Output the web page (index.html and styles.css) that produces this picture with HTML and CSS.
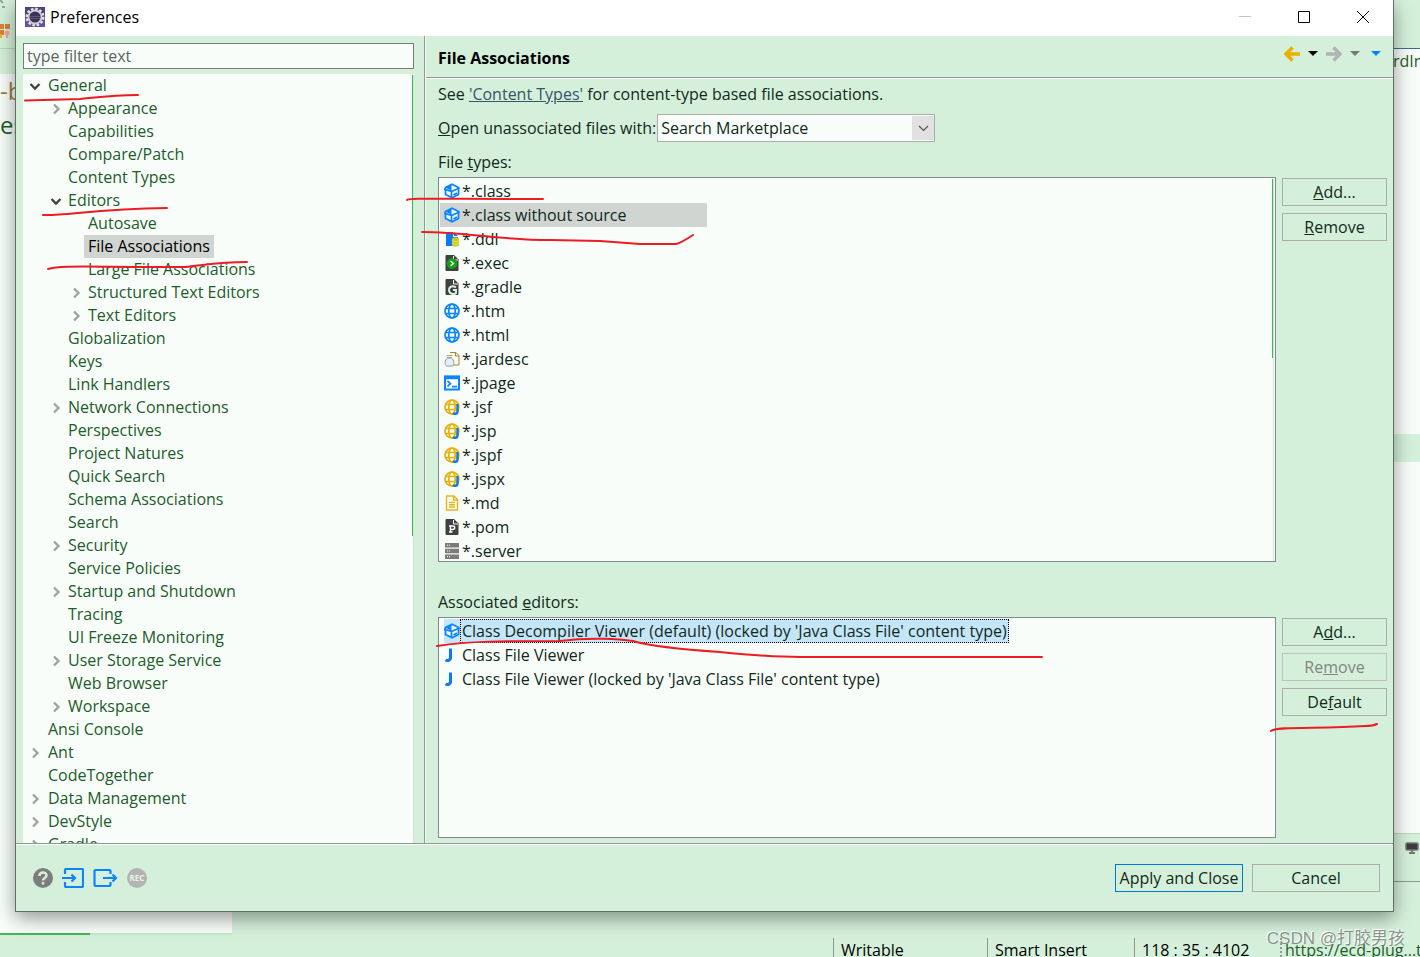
FILE: index.html
```html
<!DOCTYPE html>
<html lang="en">

<head>
  <meta charset="UTF-8">
  <meta name="viewport" content="width=device-width, initial-scale=1.0">
  <title>Preferences</title>
  <link rel="stylesheet" href="styles.css">
</head>

<body>
  <svg class="symbols" aria-hidden="true">
    <symbol id="chev" viewBox="0 0 12 12"><path d="M4 1.500 8.500 6 4 10.500" fill="none" stroke="currentColor" stroke-width="2.300"/></symbol>
    <symbol id="i-class" viewBox="0 0 16 16">
      <path d="M8 1.200 14.500 4.500v7L8 14.800 1.500 11.500v-7z" fill="#f8fdf9" stroke="#0a84ff" stroke-width="1.800"/>
      <path d="M1.500 4.500 7.500 1v7z" fill="#0a84ff"/>
      <path d="M0 6 7.500 8.500v6M7.500 8.500 15.500 5M9.500 12 13 10" fill="none" stroke="#0a84ff" stroke-width="1.800"/>
    </symbol>
    <symbol id="i-ddl" viewBox="0 0 16 16">
      <path d="M2 1h7v5h5v9H2z" fill="#0a7bf5"/><path d="M10 1l4 4h-4z" fill="#0a7bf5"/>
      <path d="M8 8c0-2 7-2 7 0v6c0 2-7 2-7 0z" fill="#c9cc1c"/>
      <path d="M8 9.500c1 1.500 6 1.500 7 0M8 12c1 1.500 6 1.500 7 0" fill="none" stroke="#f3f0a0" stroke-width=".6"/>
    </symbol>
    <symbol id="i-exec" viewBox="0 0 16 16">
      <path d="M2.500 0H10l4.500 4.500V15q0 1-1 1h-11q-1 0-1-1V1q0-1 1-1z" fill="#414141"/><path d="M9.500 1v4H14" fill="none" stroke="#f8fdf9"/>
      <circle cx="8" cy="8.500" r="5.300" fill="#16a016"/><path d="M6.500 6 9.500 8.500l-3 2.500" fill="none" stroke="#fff" stroke-width="1.300"/>
    </symbol>
    <symbol id="i-gradle" viewBox="0 0 16 16">
      <path d="M2.500 0H10l4.500 4.500V15q0 1-1 1h-11q-1 0-1-1V1q0-1 1-1z" fill="#414141"/><path d="M9.500 1v4H14" fill="none" stroke="#f8fdf9"/>
      <path d="M12 8.500C9 6 5 7.500 5 11c0 4 5 5 7 3v-3H9" fill="none" stroke="#d9f3e0" stroke-width="1.900"/>
    </symbol>
    <symbol id="i-web" viewBox="0 0 16 16">
      <g fill="none" stroke="currentColor" stroke-width="1.700">
        <circle cx="8" cy="8" r="7"/><ellipse cx="8" cy="8" rx="3.200" ry="7"/><path d="M1.500 5.500h13M1.500 10.500h13"/>
      </g>
    </symbol>
    <symbol id="i-jsp" viewBox="0 0 16 16">
      <g fill="none" stroke="#e3b20a" stroke-width="1.700">
        <circle cx="8" cy="8" r="7"/><ellipse cx="8" cy="8" rx="3.200" ry="7"/><path d="M1.500 5.500h13M1.500 10.500h13"/>
      </g>
      <path d="M13.500 5v8c0 2-3 2.500-4.500 1.200" fill="none" stroke="#0a7bf5" stroke-width="2.400"/>
    </symbol>
    <symbol id="i-jar" viewBox="0 0 16 16">
      <path d="M6 1.500h6l3 3V14H8" fill="#fffbe9" stroke="#a58443"/><path d="M11.500 1.500v3.500h3.500" fill="none" stroke="#a58443"/>
      <path d="M2.500 4.500h6M3 6.500h5" fill="none" stroke="#b59a5c"/>
      <path d="M3.500 7c-3 2-3 7-1 8h6c2-1 2-6-1-8z" fill="#e8eefb" stroke="#8f97a8"/>
    </symbol>
    <symbol id="i-jpage" viewBox="0 0 16 16">
      <rect x="1" y="1.500" width="14" height="13" fill="#fff" stroke="#0a84ff" stroke-width="2"/><path d="M0 2.500h16" stroke="#0a84ff" stroke-width="3.500"/>
      <path d="M3.500 6 6.500 8.700l-3 2.700M8 11.700h5" fill="none" stroke="#0a84ff" stroke-width="1.700"/>
    </symbol>
    <symbol id="i-md" viewBox="0 0 16 16">
      <path d="M2.500 1H10l3.500 3.500V15h-11zM9.500 1v4h4M5 7.500h6M5 9.700h6M5 12h6" fill="none" stroke="#e8b61c" stroke-width="1.400"/>
    </symbol>
    <symbol id="i-pom" viewBox="0 0 16 16">
      <path d="M2.500 0H10l4.500 4.500V15q0 1-1 1h-11q-1 0-1-1V1q0-1 1-1z" fill="#414141"/><path d="M9.500 1v4H14" fill="none" stroke="#f8fdf9"/>
      <path d="M6.500 13v-6h2c3 0 3 3.500 0 3.500h-2M5 13h3.500M5 7h2" fill="none" stroke="#fff" stroke-width="1.400"/>
    </symbol>
    <symbol id="i-server" viewBox="0 0 16 16">
      <path d="M1 0h14v4.500H1zM1 5.800h14v4.500H1zM1 11.500h14V16H1z" fill="#7c7c7c"/><path d="M3 2.200h1M5 2.200h1M3 8h1M5 8h1M3 13.700h1M5 13.700h1" stroke="#fff"/>
    </symbol>
    <symbol id="i-j" viewBox="0 0 16 16">
      <path d="M6.500 1.500v9c0 3-3 3.500-5 2.500" fill="none" stroke="#0a7bf5" stroke-width="3"/>
    </symbol>
  </svg>

  <div class="workbench">
    <div class="backdrop">
      <div class="pane pane-left">
        <div class="pane-tools">
          <svg width="12" height="40" viewBox="0 0 12 40">
            <path d="M0 0l3 3M2 7h3" stroke="#9aa59c" stroke-width="2"/>
            <path d="M0 24h4v5H0zM5 24h5v5H5zM0 30h4v5H0z" fill="#d98236"/><path d="M0 34h2v4H0z" fill="#eeb211"/>
            <circle cx="7" cy="33" r="2.500" fill="#f7a3a3"/><path d="M7 34v4" stroke="#f7a3a3" stroke-width="2"/>
          </svg>
        </div>
        <div class="pane-code">
          <span class="code-tag">-b</span>
          <span class="code-text">es</span>
        </div>
        <div class="pane-scroll"></div>
      </div>
      <div class="pane pane-right">
        <div class="pane-tab"></div>
        <div class="pane-doc">
          <span class="doc-text">rdIn</span>
          <div class="current-line"></div>
        </div>
        <div class="pane-console">
          <svg width="14" height="12" viewBox="0 0 14 12"><rect x="1" y="1" width="12" height="7" rx="1" fill="#3c3c3c" stroke="#777" stroke-width="1.500"/><path d="M7 8v3M4 11h6" stroke="#777" stroke-width="2"/></svg>
        </div>
        <div class="pane-rest"></div>
      </div>
    </div>
    <footer class="status">
      <span class="status-item status-mode">Writable</span>
      <span class="status-item status-insert">Smart Insert</span>
      <span class="status-item status-pos">118 : 35 : 4102</span>
      <span class="status-link">https://ecd-plug...t</span>
    </footer>
  </div>

  <main class="dialog">
    <header class="titlebar">
      <svg class="app-icon" width="20" height="20" viewBox="0 0 20 20">
        <rect width="20" height="20" fill="#6650a0"/><rect width="20" height="9" fill="#51417f"/>
        <circle cx="10" cy="10" r="8.300" fill="none" stroke="#e3e3de" stroke-width="2.400" stroke-dasharray="2.600 1.740"/>
        <circle cx="10" cy="10" r="6.500" fill="#3b3458" stroke="#d0d0cc" stroke-width="1.800"/><path d="M5 9.500h10M5 11.500h10" stroke="#5d5280"/>
      </svg>
      <span class="title">Preferences</span>
      <button class="win-btn" type="button" aria-label="Minimize" disabled><svg width="12" height="12"><path d="M0 5.500h12" stroke="#c4c4c4"/></svg></button>
      <button class="win-btn" type="button" aria-label="Maximize"><svg width="12" height="12"><path d="M.5.5h11v11H.5z" fill="none" stroke="#000"/></svg></button>
      <button class="win-btn" type="button" aria-label="Close"><svg width="12" height="12"><path d="M0 0l12 12M12 0 0 12" stroke="#000"/></svg></button>
    </header>

    <div class="dialog-body">
      <nav class="sidebar">
        <input class="filter" type="text" placeholder="type filter text" aria-label="type filter text">
        <div class="tree-box">
          <ul class="tree">
            <li><svg class="arrow open"><use href="#chev"/></svg><span>General</span>
              <ul>
                <li><svg class="arrow"><use href="#chev"/></svg><span>Appearance</span></li>
                <li><span>Capabilities</span></li>
                <li><span>Compare/Patch</span></li>
                <li><span>Content Types</span></li>
                <li><svg class="arrow open"><use href="#chev"/></svg><span>Editors</span>
                  <ul>
                    <li><span>Autosave</span></li>
                    <li><span class="current">File Associations</span></li>
                    <li><span>Large File Associations</span></li>
                    <li><svg class="arrow"><use href="#chev"/></svg><span>Structured Text Editors</span></li>
                    <li><svg class="arrow"><use href="#chev"/></svg><span>Text Editors</span></li>
                  </ul>
                </li>
                <li><span>Globalization</span></li>
                <li><span>Keys</span></li>
                <li><span>Link Handlers</span></li>
                <li><svg class="arrow"><use href="#chev"/></svg><span>Network Connections</span></li>
                <li><span>Perspectives</span></li>
                <li><span>Project Natures</span></li>
                <li><span>Quick Search</span></li>
                <li><span>Schema Associations</span></li>
                <li><span>Search</span></li>
                <li><svg class="arrow"><use href="#chev"/></svg><span>Security</span></li>
                <li><span>Service Policies</span></li>
                <li><svg class="arrow"><use href="#chev"/></svg><span>Startup and Shutdown</span></li>
                <li><span>Tracing</span></li>
                <li><span>UI Freeze Monitoring</span></li>
                <li><svg class="arrow"><use href="#chev"/></svg><span>User Storage Service</span></li>
                <li><span>Web Browser</span></li>
                <li><svg class="arrow"><use href="#chev"/></svg><span>Workspace</span></li>
              </ul>
            </li>
            <li><span>Ansi Console</span></li>
            <li><svg class="arrow"><use href="#chev"/></svg><span>Ant</span></li>
            <li><span>CodeTogether</span></li>
            <li><svg class="arrow"><use href="#chev"/></svg><span>Data Management</span></li>
            <li><svg class="arrow"><use href="#chev"/></svg><span>DevStyle</span></li>
            <li><svg class="arrow"><use href="#chev"/></svg><span>Gradle</span></li>
          </ul>
          <div class="scroll"><div class="thumb thumb-tree"></div></div>
        </div>
      </nav>

      <section class="page">
        <div class="page-head">
          <h1>File Associations</h1>
          <div class="history">
            <button type="button" aria-label="Back"><svg width="16" height="16" viewBox="0 0 16 16"><path d="M16 8H2M8.500 1.500 2 8l6.500 6.500" fill="none" stroke="#e8b000" stroke-width="3.500"/></svg></button>
            <button type="button" aria-label="Back history"><svg width="10" height="6"><path d="M0 0h10L5 5z" fill="#000"/></svg></button>
            <button type="button" aria-label="Forward"><svg width="16" height="16" viewBox="0 0 16 16"><path d="M0 8h14M7.500 1.500 14 8l-6.500 6.500" fill="none" stroke="#b3b3b3" stroke-width="3.500"/></svg></button>
            <button type="button" aria-label="Forward history"><svg width="10" height="6"><path d="M0 0h10L5 5z" fill="#777"/></svg></button>
            <button class="view-menu" type="button" aria-label="Menu"><svg width="10" height="6"><path d="M0 0h10L5 5z" fill="#0a84ff"/></svg></button>
          </div>
        </div>

        <div class="page-content">
          <p class="row">See <a href="#">'Content Types'</a> for content-type based file associations.</p>
          <div class="row row-open">
            <label for="open-with"><u>O</u>pen unassociated files with:</label>
            <div class="combo">
              <select id="open-with">
                <option>Search Marketplace</option>
              </select>
              <svg class="combo-arrow" width="22" height="24"><path d="M7 10l4.500 4.500L16 10" fill="none" stroke="#555" stroke-width="1.200"/></svg>
            </div>
          </div>
          <p class="row" id="types-label">File <u>t</u>ypes:</p>
          <div class="list-box">
            <ul class="list" aria-labelledby="types-label">
              <li><svg><use href="#i-class"/></svg><span>*.class</span></li>
              <li class="picked"><svg><use href="#i-class"/></svg><span>*.class without source</span></li>
              <li><svg><use href="#i-ddl"/></svg><span>*.ddl</span></li>
              <li><svg><use href="#i-exec"/></svg><span>*.exec</span></li>
              <li><svg><use href="#i-gradle"/></svg><span>*.gradle</span></li>
              <li><svg class="web"><use href="#i-web"/></svg><span>*.htm</span></li>
              <li><svg class="web"><use href="#i-web"/></svg><span>*.html</span></li>
              <li><svg><use href="#i-jar"/></svg><span>*.jardesc</span></li>
              <li><svg><use href="#i-jpage"/></svg><span>*.jpage</span></li>
              <li><svg><use href="#i-jsp"/></svg><span>*.jsf</span></li>
              <li><svg><use href="#i-jsp"/></svg><span>*.jsp</span></li>
              <li><svg><use href="#i-jsp"/></svg><span>*.jspf</span></li>
              <li><svg><use href="#i-jsp"/></svg><span>*.jspx</span></li>
              <li><svg><use href="#i-md"/></svg><span>*.md</span></li>
              <li><svg><use href="#i-pom"/></svg><span>*.pom</span></li>
              <li><svg><use href="#i-server"/></svg><span>*.server</span></li>
            </ul>
            <div class="scroll"><div class="thumb thumb-types"></div></div>
          </div>
          <div class="side-buttons">
            <button class="btn" type="button"><u>A</u>dd...</button>
            <button class="btn" type="button"><u>R</u>emove</button>
          </div>
          <p class="row row-editors" id="editors-label">Associated <u>e</u>ditors:</p>
          <div class="list-box">
            <ul class="list" aria-labelledby="editors-label">
              <li class="focused"><svg><use href="#i-class"/></svg><span>Class Decompiler Viewer (default) (locked by 'Java Class File' content type)</span></li>
              <li><svg><use href="#i-j"/></svg><span>Class File Viewer</span></li>
              <li><svg><use href="#i-j"/></svg><span>Class File Viewer (locked by 'Java Class File' content type)</span></li>
            </ul>
          </div>
          <div class="side-buttons">
            <button class="btn" type="button">A<u>d</u>d...</button>
            <button class="btn" type="button" disabled>Re<u>m</u>ove</button>
            <button class="btn" type="button">De<u>f</u>ault</button>
          </div>
        </div>
      </section>
    </div>

    <footer class="dialog-foot">
      <button class="icon-btn" type="button" aria-label="Help"><svg width="20" height="20" viewBox="0 0 20 20"><circle cx="10" cy="10" r="10" fill="#7d7d7d"/><path d="M6.500 8c0-4.500 7-4.500 7-.5 0 2.500-3.500 2.500-3.500 5M10 14v2.500" fill="none" stroke="#d5f0da" stroke-width="2.500"/></svg></button>
      <button class="icon-btn" type="button" aria-label="Import"><svg width="22" height="20" viewBox="0 0 22 20"><path d="M3 6V2q0-1 1-1h16q1 0 1 1v16q0 1-1 1H4q-1 0-1-1v-4M0 10h13M9.500 6.500 13 10l-3.500 3.500" fill="none" stroke="#0a84ff" stroke-width="2.200"/></svg></button>
      <button class="icon-btn" type="button" aria-label="Export"><svg width="25" height="20" viewBox="0 0 25 20"><path d="M17.500 6V3q0-1-1-1H2.500q-1 0-1 1v14q0 1 1 1h14q1 0 1-1v-3M10 10h13M19.500 6.500 23 10l-3.500 3.500" fill="none" stroke="#0a84ff" stroke-width="2.200"/></svg></button>
      <button class="icon-btn" type="button" aria-label="Record"><svg width="20" height="20" viewBox="0 0 20 20"><circle cx="10" cy="10" r="10" fill="#b4b4b4"/><text class="rec" x="10" y="13" text-anchor="middle">REC</text></svg></button>
      <div class="foot-actions">
        <button class="btn btn-default" type="button">Apply and Close</button>
        <button class="btn" type="button">Cancel</button>
      </div>
    </footer>
  </main>

  <!-- red pen marks -->
  <svg class="marks" width="1420" height="957" viewBox="0 0 1420 957" aria-hidden="true">
    <path d="M25 100.500 80 99C100 97 115 95 138 95"/>
    <path d="M43 215C65 216 95 209 167 208"/>
    <path d="M48 269C60 265 85 267 185 267 205 265 220 262 247 262"/>
    <path d="M407 200C410 198 425 199 543 199"/>
    <path d="M422 232C465 232 500 240 550 240L600 241 640 244H676Q681 243 693 235"/>
    <path d="M437 646C470 641 500 641 560 641 590 637 620 639 633 641 650 646 690 650 720 652 750 655 770 657 800 657H1042"/>
    <path d="M1271 731C1275 726 1320 729 1365 726Q1373 726 1377 724"/>
  </svg>
  <div class="watermark">CSDN @打胶男孩</div>
</body>

</html>
```

FILE: styles.css
```css
* {
  box-sizing: border-box;
}
body {
  margin: 0;
  height: 100vh;
  position: relative;
  overflow: hidden;
  background: #d5f0da;
  color: #10291a;
  font-family: "Open Sans", "Noto Sans", "Noto Sans CJK SC", sans-serif;
  font-size: 16px;
  line-height: 24px;
}
ul {
  list-style: none;
  margin: 0;
  padding: 0;
}
p, h1 {
  margin: 0;
}
button, input, select {
  font: inherit;
  color: inherit;
}
button {
  background: none;
  border: 0;
  padding: 0;
}
svg {
  display: block;
}
.symbols {
  position: absolute;
  width: 0;
  height: 0;
}

/* workbench behind the dialog */
.workbench {
  height: 100%;
  display: flex;
  flex-direction: column;
}
.backdrop {
  flex: 1;
  min-height: 0;
  display: flex;
  justify-content: space-between;
}
.pane {
  display: flex;
  flex-direction: column;
}
.pane-left {
  width: 232px;
  padding-bottom: 3px;
}
.pane-tools {
  height: 74px;
  background: linear-gradient(#b9d9bf, #b9d9bf) 0 48px / 100% 1px no-repeat;
}
.pane-code {
  flex: 1;
  background: #f8fdf9;
  font-size: 24px;
  line-height: 34px;
}
.pane-code span {
  display: block;
}
.code-tag {
  color: #9a7a45;
}
.code-text {
  color: #1d5c2c;
}
.pane-scroll {
  height: 2px;
  background: linear-gradient(to right, #3db85a 90px, #c2e8ca 90px);
}
.pane-right {
  width: 60px;
}
.pane-tab {
  height: 49px;
  border-bottom: 1px solid #416a94;
}
.pane-doc {
  flex: 1;
  background: #f8fdf9;
}
.doc-text {
  display: block;
  height: 385px;
  padding-left: 33px;
  color: #1d5c2c;
}
.current-line {
  height: 28px;
  background: #d5f0da;
}
.pane-console {
  height: 49px;
  border-top: 1px solid #b9d9bf;
  border-bottom: 1px solid #8e9a91;
  padding: 8px 0 0 45px;
}
.pane-rest {
  height: 56px;
}
.status {
  height: 19px;
  display: flex;
  justify-content: flex-end;
  overflow: hidden;
  white-space: nowrap;
  color: #000;
}
.status-item {
  padding-left: 7px;
  border-left: 1px solid #8e9a91;
}
.status-mode {
  width: 154px;
}
.status-insert {
  width: 147px;
}
.status-pos {
  width: 146px;
}
.status-link {
  width: 140px;
  padding-left: 3px;
  border-left: 2px dotted #8e9a91;
  color: #1d5c2c;
}

/* dialog window */
.dialog {
  position: absolute;
  top: 0;
  right: 26px;
  bottom: 45px;
  left: 15px;
  display: flex;
  flex-direction: column;
  background: #d5f0da;
  border: 1px solid #5f6f64;
  border-top: 0;
  box-shadow: 0 6px 18px rgba(0, 0, 0, 0.4);
}
.titlebar {
  height: 36px;
  flex: none;
  display: flex;
  align-items: center;
  padding: 0 1px 2px 9px;
  background: #fff;
  color: #000;
}
.title {
  flex: 1;
  padding-left: 5px;
}
.win-btn {
  width: 59px;
  height: 34px;
  display: grid;
  place-items: center;
}
.dialog-body {
  flex: 1;
  min-height: 0;
  display: flex;
}

/* tree */
.sidebar {
  width: 409px;
  flex: none;
  display: flex;
  flex-direction: column;
  padding: 7px 10px 0 7px;
  border-right: 1px solid #8e9a91;
}
.filter {
  height: 26px;
  width: 100%;
  padding: 0 3px;
  background: #f8fdf9;
  border: 1px solid #7a7a7a;
}
.filter::placeholder {
  color: #5a6660;
}
.tree-box {
  position: relative;
  flex: 1;
  min-height: 0;
  margin-top: 5px;
  overflow: hidden;
  background: #f8fdf9;
}
.tree {
  color: #1d5c2c;
  line-height: 23px;
}
.tree li {
  position: relative;
  padding-left: 20px;
}
.tree li > span {
  display: inline-block;
  height: 23px;
  padding: 0 4px;
  vertical-align: top;
}
.tree > li {
  padding-left: 21px;
}
.tree .current {
  background: #d1d5d1;
  color: #000;
}
.arrow {
  position: absolute;
  left: 6px;
  top: 6px;
  width: 12px;
  height: 12px;
  color: #a0a0a0;
}
.arrow.open {
  color: #404040;
  transform: rotate(90deg);
}
.scroll {
  position: absolute;
  top: 1px;
  right: 0;
  bottom: 0;
  width: 2px;
  border-right: 1px solid #c9e8cf;
}
.list-box .scroll {
  right: 1px;
}
.thumb {
  width: 1px;
  background: #3db85a;
}
.thumb-tree {
  height: 60%;
}
.thumb-types {
  height: 47%;
}

/* preference page */
.page {
  flex: 1;
  min-width: 0;
  display: flex;
  flex-direction: column;
  border-left: 1px solid #fff;
}
.page-head {
  height: 42px;
  display: flex;
  justify-content: space-between;
  padding: 0 12px;
  border-bottom: 1px solid #8e9a91;
}
h1 {
  font-size: 16px;
  line-height: 44px;
  color: #000;
}
.history {
  display: flex;
  align-items: center;
  gap: 8px;
  height: 36px;
}
.view-menu {
  margin-left: 3px;
}
.page-content {
  flex: 1;
  min-height: 0;
  display: grid;
  grid-template-columns: 1fr 105px;
  grid-template-rows: 30px 38px 30px 40fr 55px 23fr;
  column-gap: 6px;
  padding: 0 6px 5px 12px;
  border-top: 1px solid #fff;
}
.row {
  grid-column: 1 / -1;
  line-height: 30px;
}
.row a {
  color: #33566a;
}
.row-open {
  display: flex;
  align-items: center;
  gap: 1px;
}
.row-editors {
  padding-top: 25px;
}
.combo {
  position: relative;
}
.combo select {
  display: block;
  appearance: none;
  width: 278px;
  height: 28px;
  padding: 0 3px;
  line-height: 24px;
  background: #f8fdf9;
  border: 1px solid #adadad;
  border-radius: 0;
}
.combo-arrow {
  position: absolute;
  top: 2px;
  right: 1px;
  background: #e1e1e1;
  pointer-events: none;
}
.list-box {
  position: relative;
  min-height: 0;
  overflow: hidden;
  padding: 1px;
  background: #f8fdf9;
  border: 1px solid #828790;
}
.list li {
  display: flex;
  align-items: center;
  width: max-content;
  padding-left: 4px;
}
.list svg {
  width: 16px;
  height: 16px;
}
.list .web {
  color: #0a84ff;
}
.list span {
  padding: 0 2px;
}
.list .picked {
  width: 267px;
  background: #d1d5d1;
}
.list .focused {
  margin-left: 4px;
  padding-left: 0;
  background: #c5e5f9;
}
.list .focused span {
  line-height: 22px;
  padding: 0 1px;
  border: 1px dotted #000;
}
.side-buttons {
  display: flex;
  flex-direction: column;
  gap: 7px;
  padding-top: 1px;
}
.btn {
  height: 28px;
  border: 1px solid #adadad;
}
.btn:disabled {
  color: #838383;
  border-color: #bfbfbf;
}

.dialog-foot {
  height: 68px;
  flex: none;
  display: flex;
  align-items: center;
  gap: 9px;
  padding: 0 13px 0 17px;
  border-top: 1px solid #8e9a91;
  box-shadow: inset 0 1px #fff;
}
.rec {
  font-size: 8px;
  font-weight: bold;
  fill: #e6f2e8;
}
.foot-actions {
  display: flex;
  gap: 9px;
  margin-left: auto;
}
.foot-actions .btn {
  width: 128px;
}
.foot-actions .btn-default {
  border-color: #0078d7;
}

.marks {
  position: absolute;
  top: 0;
  left: 0;
  pointer-events: none;
  fill: none;
  stroke: #ed1c24;
  stroke-width: 2;
  stroke-linecap: round;
}
.watermark {
  position: absolute;
  right: 15px;
  bottom: 6px;
  font-family: "Liberation Sans", "Noto Sans CJK SC", sans-serif;
  font-size: 17px;
  color: rgba(120, 130, 122, 0.85);
  text-shadow: -1px -1px #fff;
}
```
